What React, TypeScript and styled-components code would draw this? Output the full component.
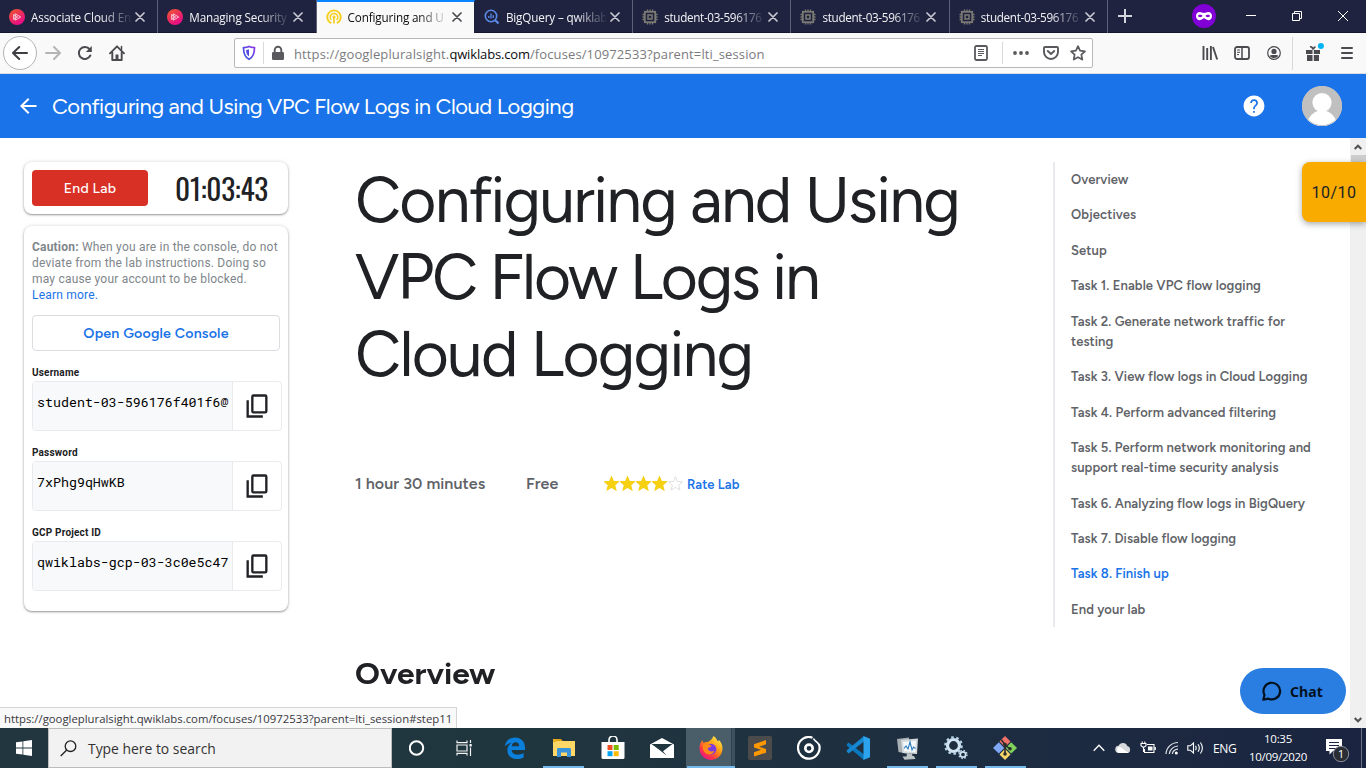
import React from 'react';
import styled, { createGlobalStyle, css } from 'styled-components';

const ui = '"Open Sans", "Noto Sans", sans-serif';
const display = 'Figtree, Lato, sans-serif';
const text = 'Figtree, Inter, sans-serif';

const GlobalStyle = createGlobalStyle`
  * { box-sizing: border-box; }
  html, body { margin: 0; padding: 0; overflow: hidden; }
  body { background: #fff; font-family: ${ui}; color: #202124; }
  svg { display: block; flex: none; }
  button { font: inherit; border: 0; background: none; padding: 0; margin: 0; }
  a { color: inherit; text-decoration: none; }
`;

const Screen = styled.div`
  width: 1366px;
  height: 768px;
  display: flex;
  flex-direction: column;
  overflow: hidden;
  position: relative;
`;

/* ---------- browser tab strip ---------- */

const TabStrip = styled.div`
  height: 33px;
  flex: none;
  display: flex;
  background: #20233f;
  border-bottom: 1px solid #15172c;
`;

const TabBox = styled.div<{ $active?: boolean }>`
  width: 158.3px;
  height: 33px;
  flex: none;
  display: flex;
  align-items: center;
  padding: 1px 0 0 9px;
  border-right: 1px solid ${p => (p.$active ? '#20233f' : '#5f6179')};
  color: #f4f4f8;
  ${p => p.$active && css`
    background: #f9f9fa;
    color: #0c0c0d;
    border-top: 2px solid #0a84ff;
    padding-top: 0;
    padding-bottom: 1px;
  `}
`;

const TabTitle = styled.span<{ $tight?: boolean }>`
  width: 100px;
  margin-left: 6px;
  white-space: nowrap;
  font-size: 11.7px;
  line-height: 18px;
  letter-spacing: ${p => (p.$tight ? -0.32 : -0.15)}px;
  mask-image: linear-gradient(to right, #000 70px, transparent 102px);
`;

const TabClose = styled.button`
  width: 18px;
  display: flex;
  justify-content: center;
  color: inherit;
`;

const NewTab = styled.button`
  width: 33px;
  display: flex;
  align-items: center;
  justify-content: center;
`;

const WindowButtons = styled.div`
  margin-left: auto;
  display: flex;
  align-items: center;
`;

const PrivateMark = styled.div`
  width: 24px;
  margin-right: 12px;
`;

const WindowButton = styled.button`
  width: 46px;
  height: 32px;
  display: flex;
  align-items: center;
  justify-content: center;
`;

/* ---------- browser toolbar ---------- */

const Toolbar = styled.div`
  height: 41px;
  flex: none;
  display: flex;
  align-items: center;
  background: #f9f9fa;
  border-bottom: 1px solid #dcdce0;
  padding-left: 3px;
`;

const BackButton = styled.button`
  width: 34px;
  height: 34px;
  border: 1px solid #b5b5b8;
  border-radius: 50%;
  background: #fff;
  display: flex;
  align-items: center;
  justify-content: center;
`;

const ToolButton = styled.button<{ $w?: number }>`
  width: ${p => p.$w ?? 32}px;
  height: 32px;
  flex: none;
  display: flex;
  align-items: center;
  justify-content: center;
`;

const AddressBar = styled.div`
  width: 859px;
  height: 30px;
  margin-left: 101px;
  display: flex;
  align-items: center;
  background: #fff;
  border: 1px solid #b8b8ba;
  border-radius: 2px;
`;

const BarDivider = styled.i<{ $h: number }>`
  width: 1px;
  height: ${p => p.$h}px;
  background: #d9d9dc;
`;

const Url = styled.div`
  flex: 1;
  margin-left: 1px;
  padding-top: 1px;
  font-size: 13px;
  line-height: 20px;
  letter-spacing: 0.12px;
  white-space: nowrap;
  color: #7b7b7e;
`;

const UrlHost = styled.span`
  color: #0c0c0d;
  letter-spacing: -0.15px;
`;

const ToolbarEnd = styled.div`
  display: flex;
  align-items: center;
  margin-left: auto;
  padding-right: 6px;
`;

/* ---------- lab page ---------- */

const LabHeader = styled.header`
  height: 64px;
  flex: none;
  display: flex;
  align-items: center;
  background: #1a73e8;
  color: #fff;
  padding: 0 24px 0 16px;
`;

const LabTitle = styled.div`
  margin-left: 12px;
  padding-top: 1px;
  font-family: ${display};
  font-size: 22px;
  line-height: 28px;
  letter-spacing: -0.49px;
  white-space: nowrap;
`;

const HeaderActions = styled.div`
  margin-left: auto;
  display: flex;
  align-items: center;
  gap: 36px;
`;

const Page = styled.div`
  flex: 1;
  min-height: 0;
  display: flex;
  background: #fff;
`;

const LabPanel = styled.aside`
  width: 264px;
  margin: 24px 0 0 24px;
  display: flex;
  flex-direction: column;
  gap: 12px;
`;

const Card = styled.section`
  background: #fff;
  border-radius: 8px;
  box-shadow: 0 1px 2px rgba(60, 64, 67, 0.5), 0 0 4px rgba(60, 64, 67, 0.14);
`;

const TimerCard = styled(Card)`
  height: 52px;
  display: flex;
  align-items: center;
  padding: 0 8px;
`;

const EndButton = styled.button`
  width: 116px;
  height: 36px;
  border-radius: 4px;
  background: #d93025;
  color: #fff;
  font-family: ${text};
  font-size: 14px;
  font-weight: 500;
  letter-spacing: 0.25px;
`;

const Timer = styled.div`
  margin-left: 27px;
  font-family: Oswald, "Roboto Condensed", sans-serif;
  font-size: 29.3px;
  line-height: 52px;
  letter-spacing: -0.25px;
`;

const AccessCard = styled(Card)`
  height: 385px;
  padding: 13px 6px 0 8px;
`;

const Caution = styled.p`
  margin: 0;
  font-family: Roboto, sans-serif;
  font-size: 12px;
  line-height: 16px;
  letter-spacing: 0.2px;
  color: #80868b;
  white-space: nowrap;
`;

const BlueLink = styled.a`
  color: #1a73e8;
`;

const ConsoleButton = styled.button`
  display: block;
  width: 248px;
  height: 36px;
  margin-top: 12px;
  border: 1px solid #dadce0;
  border-radius: 4px;
  color: #1a73e8;
  font-family: ${text};
  font-size: 14.2px;
  font-weight: 600;
  letter-spacing: 0.2px;
`;

const Credential = styled.div`
  margin-top: 14px;
`;

const CredentialLabel = styled.div`
  height: 16px;
  font-family: Roboto, sans-serif;
  font-size: 10px;
  font-weight: 700;
  line-height: 15px;
  letter-spacing: 0.19px;
`;

const CredentialField = styled.div`
  height: 50px;
  display: flex;
  border: 1px solid #e8eaed;
  border-radius: 4px;
  overflow: hidden;
`;

const CredentialValue = styled.div`
  width: 200px;
  padding: 0 3px 8px 4px;
  display: flex;
  align-items: center;
  background: #f8f9fa;
  border-right: 1px solid #e8eaed;
  font-family: "Roboto Mono", "DejaVu Sans Mono", monospace;
  font-size: 13.3px;
  white-space: nowrap;
  color: #000;
`;

const CopyButton = styled.button`
  flex: 1;
  display: flex;
  align-items: center;
  justify-content: center;
`;

const Article = styled.main`
  width: 698px;
  margin-left: 67px;
  padding-top: 23px;
`;

const Heading = styled.h1`
  margin: 0;
  font-family: ${display};
  font-size: 64px;
  font-weight: 400;
  line-height: 77px;
  white-space: nowrap;
`;

const HeadingLine = styled.span<{ $spacing: number }>`
  display: block;
  letter-spacing: ${p => p.$spacing}px;
`;

const Facts = styled.div`
  display: flex;
  align-items: center;
  height: 24px;
  margin-top: 79px;
  font-family: ${text};
  font-size: 16px;
  font-weight: 600;
  letter-spacing: 0.08px;
  color: #5f6368;
  white-space: nowrap;
`;

const Duration = styled.span`
  width: 171px;
`;

const Price = styled.span`
  width: 78px;
`;

const Stars = styled.span`
  display: flex;
  width: 83px;
`;

const RateLink = styled(BlueLink)`
  font-size: 13px;
  padding-top: 2px;
`;

const SectionHeading = styled.h2`
  width: 128px;
  margin: 159px 0 0;
  font-family: ${text};
  font-size: 29px;
  font-weight: 700;
  line-height: 40px;
  transform: scaleX(1.09);
  transform-origin: 0 0;
`;

const Outline = styled.nav`
  width: 270px;
  height: 465px;
  margin-top: 24px;
  padding: 8px 0 0 16px;
  border-left: 2px solid #e8eaed;
  display: flex;
  flex-direction: column;
  gap: 15.45px;
`;

const OutlineLink = styled.a<{ $current?: boolean }>`
  font-family: ${text};
  font-size: 13px;
  font-weight: 600;
  line-height: 20px;
  letter-spacing: 0.1px;
  color: ${p => (p.$current ? '#1a73e8' : '#5f6368')};
`;

const Scrollbar = styled.div`
  width: 16px;
  margin-left: auto;
  display: flex;
  flex-direction: column;
  align-items: center;
  background: #f0f0f0;
`;

const ScrollArrow = styled.div`
  height: 17px;
  display: flex;
  align-items: center;
`;

const ScrollThumb = styled.div`
  width: 15px;
  height: 55px;
  background: #cdcdcd;
  margin-bottom: auto;
`;

const ScoreBadge = styled.div`
  position: absolute;
  left: 1302px;
  top: 162px;
  width: 64px;
  height: 60px;
  border-radius: 8px 0 0 8px;
  background: #f9ab00;
  box-shadow: 0 2px 6px rgba(60, 64, 67, 0.45);
  display: flex;
  align-items: center;
  justify-content: center;
  font-family: Roboto, sans-serif;
  font-size: 16px;
  letter-spacing: 0.5px;
`;

const ChatButton = styled.button`
  position: absolute;
  left: 1240px;
  top: 668px;
  width: 106px;
  height: 46px;
  border-radius: 23px;
  background: #2a7de1;
  display: flex;
  align-items: center;
  padding-left: 21px;
  gap: 7px;
  color: #03111f;
  font-family: "Noto Sans", sans-serif;
  font-size: 14px;
  font-weight: 700;
  letter-spacing: 0.1px;
`;

const LinkPreview = styled.div`
  position: absolute;
  left: 0;
  top: 707px;
  width: 457px;
  height: 21px;
  padding: 1px 0 0 4px;
  border: solid #d4d4d8;
  border-width: 1px 1px 0 0;
  background: #f9f9fa;
  font-size: 11.33px;
  line-height: 20px;
  white-space: nowrap;
  color: #38383d;
`;

/* ---------- taskbar ---------- */

const Taskbar = styled.footer`
  height: 40px;
  flex: none;
  display: flex;
  background: linear-gradient(to right, #21363f, #20363f 40%, #1d2c41 75%, #1a2440);
  color: #fff;
`;

const StartButton = styled.button`
  width: 48px;
  display: flex;
  align-items: center;
  justify-content: center;
`;

const SearchBox = styled.div`
  width: 344px;
  display: flex;
  align-items: center;
  padding-left: 11px;
  gap: 11px;
  background: #f2f2f2;
  border: 1px solid #bcbcbc;
  color: #333;
  font-size: 13.9px;
`;

const AppSlot = styled.div<{ $open?: boolean; $focus?: boolean }>`
  width: 49.07px;
  height: 40px;
  display: flex;
  align-items: center;
  justify-content: center;
  position: relative;
  ${p => p.$focus && css`
    background: linear-gradient(to right, #4a5e69 0 45px, #2b424f 45px 46px, #3c515d 46px);
  `}
  ${p => (p.$open || p.$focus) && css`
    &::after {
      content: '';
      position: absolute;
      left: ${p.$focus ? 1 : 4}px;
      right: ${p.$focus ? 0 : 4}px;
      bottom: 0;
      height: 2px;
      background: #76b9ed;
    }
  `}
`;

const Tray = styled.div`
  margin-left: auto;
  display: flex;
  align-items: center;
  font-size: 12px;
`;

const TrayIcon = styled.div<{ $w: number }>`
  width: ${p => p.$w}px;
  display: flex;
  justify-content: center;
`;

const Language = styled.div`
  width: 32px;
  padding-left: 6px;
  letter-spacing: -0.4px;
`;

const Clock = styled.div`
  width: 78px;
  text-align: center;
  font-size: 11.5px;
  line-height: 18px;
  letter-spacing: -0.3px;
`;

const Notifications = styled.div`
  width: 44px;
  padding: 4px 4px 0 0;
  display: flex;
  justify-content: center;
`;

const ShowDesktop = styled.div`
  width: 5px;
  height: 40px;
  border-left: 1px solid #6a7386;
`;

/* ---------- icons ---------- */

const PluralsightIcon = () => (
  <svg width="16" height="16" viewBox="0 0 16 16">
    <defs>
      <linearGradient id="ps" x1="0" y1="0" x2="0.6" y2="1">
        <stop offset="0" stopColor="#f05a28" />
        <stop offset="1" stopColor="#e80a89" />
      </linearGradient>
    </defs>
    <circle cx="8" cy="8" r="8" fill="url(#ps)" />
    <path d="M6.200 4.800 11.700 8l-5.500 3.200zM4.600 5.600v4.800L8.600 8z" fill="none" stroke="#fff" strokeWidth=".7" />
  </svg>
);

const QwiklabsIcon = () => (
  <svg width="16" height="16" viewBox="0 0 16 16" fill="none" stroke="#f5cf1d">
    <path d="M5.200 14.200A6.700 6.700 0 1 1 10.800 14.200" strokeWidth="1.900" />
    <path d="M5.400 11A3.800 3.800 0 1 1 10.600 11" strokeWidth="1.500" />
    <circle cx="8" cy="8" r="1.500" fill="#f5cf1d" stroke="none" />
    <path d="M8 8v6.500" strokeWidth="1.700" />
  </svg>
);

const BigQueryIcon = () => (
  <svg width="16" height="16" viewBox="0 0 16 16" fill="none" stroke="#5b8bea">
    <circle cx="7" cy="7" r="5.700" strokeWidth="1.600" />
    <path d="M11.200 11.200 14.500 14.500" strokeWidth="2.200" />
    <path d="M4.800 7v2M7 4.600v5M9.200 6.200v2.800" strokeWidth="1.300" />
  </svg>
);

const ChipIcon = () => (
  <svg width="16" height="16" viewBox="0 0 16 16" fill="none" stroke="#7b7a74">
    <rect x="2.800" y="2.800" width="10.400" height="10.400" strokeWidth="1.800" />
    <rect x="6" y="6" width="4" height="4" strokeWidth="1.500" />
    <path d="M5.500.5v2M8 .5v2M10.500.5v2M5.500 13.500v2M8 13.500v2M10.500 13.500v2M.5 5.500h2M.5 8h2M.5 10.500h2M13.500 5.500h2M13.500 8h2M13.500 10.500h2" strokeWidth="1.300" />
  </svg>
);

const CloseIcon = ({ color }: { color: string }) => (
  <svg width="10" height="10" viewBox="0 0 10 10" stroke={color} strokeWidth="1.700" strokeLinecap="round">
    <path d="M1 1l8 8M9 1 1 9" />
  </svg>
);

const PlusIcon = () => (
  <svg width="14" height="14" viewBox="0 0 14 14" stroke="#d4d4de" strokeWidth="2">
    <path d="M7 0v14M0 7h14" />
  </svg>
);

const MaskIcon = () => (
  <svg width="24" height="24" viewBox="0 0 24 24">
    <circle cx="12" cy="12" r="12" fill="#8000d7" />
    <path fillRule="evenodd" fill="#fff" d="M7.700 8C5.200 8 4 9.700 4 12c0 2.500 1.500 4.200 3.600 4.200 2.300 0 3.200-1.900 4.400-1.900s2.100 1.900 4.400 1.900c2.100 0 3.600-1.700 3.600-4.200 0-2.300-1.200-4-3.700-4-1.900 0-2.700 1-4.300 1S9.600 8 7.700 8zM8.200 10.800c1.200 0 2.100.6 2.400 1.300-.5.700-1.300 1.100-2.400 1.100s-1.900-.5-2.200-1.200c.3-.7 1-1.200 2.200-1.200zm7.600 0c1.200 0 1.900.5 2.200 1.200-.3.700-1.100 1.200-2.200 1.200s-1.900-.4-2.400-1.100c.3-.7 1.200-1.300 2.400-1.300z" />
  </svg>
);

const MinimizeIcon = () => (
  <svg width="10" height="10" viewBox="0 0 10 10"><path d="M0 4.500h10" stroke="#fff" /></svg>
);
const RestoreIcon = () => (
  <svg width="10" height="10" viewBox="0 0 10 10" fill="none" stroke="#fff">
    <path d="M.5 2.500h7v7h-7zM2.500 2.500v-2h7v7h-2" />
  </svg>
);
const WindowCloseIcon = () => (
  <svg width="10" height="10" viewBox="0 0 10 10" stroke="#fff"><path d="M0 0l10 10M10 0 0 10" /></svg>
);

const ArrowIcon = ({ color, flip }: { color: string; flip?: boolean }) => (
  <svg width="16" height="16" viewBox="0 0 16 16" fill="none" stroke={color} strokeWidth="2" strokeLinecap="round" strokeLinejoin="round">
    <path d={flip ? 'M1 8h14M9 2l6 6-6 6' : 'M15 8H1M7.200 2 1 8l6.200 6'} />
  </svg>
);

const ReloadIcon = () => (
  <svg width="16" height="16" viewBox="0 0 16 16" fill="none" stroke="#4a4a4f" strokeWidth="2" strokeLinecap="round">
    <path d="M13.300 10.500A6 6 0 1 1 12.600 4.200" />
    <path d="M14.800 1v6H8.800z" fill="#4a4a4f" stroke="none" />
  </svg>
);

const HomeIcon = () => (
  <svg width="16" height="16" viewBox="0 0 16 16" fill="none" stroke="#4a4a4f" strokeWidth="1.900" strokeLinejoin="round" strokeLinecap="round">
    <path d="M1 8.300 8 1.300l7 7" />
    <path d="M3.300 7.500V15h9.400V7.500" />
    <path d="M8 9.500V15" strokeWidth="3" strokeLinecap="butt" />
    <path d="M12.500 1.500v3" strokeWidth="1.500" />
  </svg>
);

const ShieldIcon = () => (
  <svg width="14" height="16" viewBox="0 0 14 16">
    <defs>
      <linearGradient id="sh" x1="0" y1="1" x2="1" y2="0">
        <stop offset="0" stopColor="#2f5bdd" />
        <stop offset="1" stopColor="#8a35e8" />
      </linearGradient>
    </defs>
    <path d="M7 1.400C5.500 2.200 3.600 2.500 1.500 2.700c0 5.300.8 9.200 5.500 11.600 4.700-2.400 5.500-6.300 5.500-11.600C10.400 2.500 8.500 2.200 7 1.400z" fill="none" stroke="url(#sh)" strokeWidth="1.700" />
    <path d="M7 4.200v7.300C4.800 9.900 4.200 8 4.100 4.900 5.200 4.800 6.100 4.600 7 4.200z" fill="#5548e0" />
  </svg>
);

const LockIcon = () => (
  <svg width="14" height="16" viewBox="0 0 14 16">
    <rect x="0" y="7" width="12" height="8" rx="1.200" fill="#5a5a5e" />
    <path d="M2.700 8V5a3.300 3.300 0 0 1 6.600 0v3" fill="none" stroke="#5a5a5e" strokeWidth="1.900" />
  </svg>
);

const ReaderIcon = () => (
  <svg width="14" height="16" viewBox="0 0 14 16" fill="none" stroke="#5a5a5e">
    <rect x="1" y="1" width="12" height="14" rx="1.500" strokeWidth="1.800" />
    <path d="M4 4.500h6M4 6.500h6M4 8.500h6M4 10.500h4" />
  </svg>
);

const DotsIcon = () => (
  <svg width="16" height="4" viewBox="0 0 16 4" fill="#5a5a5e">
    <circle cx="2" cy="2" r="1.900" /><circle cx="8" cy="2" r="1.900" /><circle cx="14" cy="2" r="1.900" />
  </svg>
);

const PocketIcon = () => (
  <svg width="16" height="14" viewBox="0 0 16 14" fill="none" stroke="#5a5a5e" strokeWidth="1.900" strokeLinecap="round" strokeLinejoin="round">
    <path d="M2 1h12a1 1 0 0 1 1 1v4a7 7 0 0 1-14 0V2a1 1 0 0 1 1-1z" />
    <path d="M4.800 5 8 8l3.200-3" />
  </svg>
);

const StarOutlineIcon = () => (
  <svg width="16" height="16" viewBox="0 0 16 16" fill="none" stroke="#5a5a5e" strokeWidth="1.700" strokeLinejoin="round">
    <path d="M8 1.200l2.050 4.500 4.900.6-3.600 3.400.95 4.900L8 12.200l-4.300 2.400.95-4.900-3.600-3.400 4.900-.6z" />
  </svg>
);

const LibraryIcon = () => (
  <svg width="16" height="14" viewBox="0 0 16 14" stroke="#4a4a4f" strokeWidth="1.900">
    <path d="M1.500 0v14M5.200 2v12M8.900 0v14M11 1l4.200 12.500" />
  </svg>
);

const SidebarIcon = () => (
  <svg width="16" height="14" viewBox="0 0 16 14" fill="none" stroke="#4a4a4f" strokeWidth="1.800">
    <rect x="1" y="1" width="14" height="12" rx="2" />
    <path d="M8 1v12" strokeWidth="1.500" />
    <path d="M3 4h3M3 6.300h3M3 8.600h2" strokeWidth="1" />
  </svg>
);

const AccountIcon = () => (
  <svg width="14" height="14" viewBox="0 0 14 14">
    <circle cx="7" cy="7" r="6.300" fill="none" stroke="#4a4a4f" strokeWidth="1.200" />
    <circle cx="7" cy="5.400" r="2.600" fill="#4a4a4f" />
    <path d="M2.700 9.800C4 9 5 9 7 9s3 0 4.300.8C10.300 11.500 8.800 12 7 12s-3.300-.5-4.300-2.200z" fill="#4a4a4f" />
  </svg>
);

const GiftIcon = () => (
  <svg width="20" height="20" viewBox="0 0 20 20">
    <path d="M1 7h6.500v4H1zM8.800 7H15v4H8.800zM2 12h5.500v6H2zM8.800 12H14v6H8.800z" fill="#4a4a4f" />
    <path d="M8 6.500C7.500 4.500 6.500 3.500 5 3.800M8.300 6.500c.3-1.600 1-2.500 2.200-2.700" fill="none" stroke="#4a4a4f" strokeWidth="1.700" />
    <circle cx="15.900" cy="3" r="3" fill="#00b3f4" />
  </svg>
);

const MenuIcon = () => (
  <svg width="12" height="12" viewBox="0 0 12 12" stroke="#4a4a4f" strokeWidth="2" strokeLinecap="round">
    <path d="M1 1h10M1 6h10M1 11h10" />
  </svg>
);

const HeaderBackIcon = () => (
  <svg width="24" height="24" viewBox="0 0 24 24" fill="#fff">
    <path d="M20.500 11H7.830l5.590-5.590L12 4l-8 8 8 8 1.410-1.410L7.830 13H20.500z" />
  </svg>
);

const HelpIcon = () => (
  <svg width="24" height="24" viewBox="0 0 24 24" fill="#fff">
    <path d="M12 1.600C6.300 1.600 1.600 6.300 1.600 12S6.300 22.400 12 22.400 22.400 17.700 22.400 12 17.700 1.600 12 1.600zm.8 17.200h-1.700v-1.700h1.700zm2.100-7.400-.9.900c-.8.800-1.200 1.500-1.200 3h-1.700v-.5c0-1.200.5-2.200 1.200-3l1.200-1.200c.4-.4.7-.9.700-1.500a2.200 2.200 0 0 0-4.400 0H8.200a3.800 3.800 0 0 1 7.700 0c0 .9-.4 1.700-1 2.300z" />
  </svg>
);

const Avatar = () => (
  <svg width="40" height="40" viewBox="0 0 40 40">
    <defs><clipPath id="av"><circle cx="20" cy="20" r="20" /></clipPath></defs>
    <g clipPath="url(#av)">
      <rect width="40" height="40" fill="#c0c0c0" />
      <path d="M5 36C9 27 14 24.500 20 24.500S31 27 35 36v6H5z" fill="#fff" />
      <circle cx="20" cy="16.500" r="9.600" fill="#fff" />
    </g>
    <circle cx="20" cy="20" r="19.600" fill="none" stroke="#c0c0c0" />
  </svg>
);

const CopyIcon = () => (
  <svg width="28" height="28" viewBox="0 0 24 24" fill="none" stroke="#202124" strokeWidth="2">
    <rect x="8" y="3" width="12" height="14.500" rx="1" />
    <path d="M4 7v14h13" />
  </svg>
);

const starPath = 'M7.500.8l2 4.600 5 .4-3.800 3.300 1.200 4.900-4.400-2.600L3.100 14l1.200-4.900L.5 5.800l5-.4z';
const RatingStar = ({ filled }: { filled?: boolean }) => (
  <svg width="16" height="15" viewBox="0 0 16 15">
    <path d={starPath} fill={filled ? '#f7d012' : '#fff'} stroke={filled ? '#f4d01a' : '#d8d8d8'} strokeWidth={filled ? 1.1 : 0.8} />
  </svg>
);

const ScrollChevron = ({ down }: { down?: boolean }) => (
  <svg width="8" height="6" viewBox="0 0 8 6" fill="none" stroke="#505050" strokeWidth="2">
    <path d={down ? 'M.7 1 4 4.300 7.300 1' : 'M.7 5 4 1.700 7.300 5'} />
  </svg>
);

const ChatIcon = () => (
  <svg width="22" height="22" viewBox="0 0 22 22" fill="none" stroke="#03111f" strokeWidth="2.200" strokeLinejoin="round">
    <path d="M2.300 19.700 3.500 15A8.300 8.300 0 1 1 7.500 18.700z" />
  </svg>
);

const WindowsIcon = () => (
  <svg width="16" height="16" viewBox="0 0 16 16" fill="#fff">
    <path d="M0 2.300 6.500 1.400v6.200H0zM7.300 1.300 16 0v7.600H7.300zM0 8.400h6.500v6.200L0 13.700zM7.300 8.400H16V16l-8.700-1.300z" />
  </svg>
);

const SearchIcon = () => (
  <svg width="17" height="17" viewBox="0 0 17 17" fill="none" stroke="#222" strokeWidth="1.300">
    <circle cx="10.500" cy="6.200" r="5.300" /><path d="M6.700 10 .7 16" />
  </svg>
);

const CortanaIcon = () => (
  <svg width="16" height="16" viewBox="0 0 16 16"><circle cx="7.500" cy="8" r="6.700" fill="none" stroke="#fff" strokeWidth="2" /></svg>
);

const TaskViewIcon = () => (
  <svg width="20" height="16" viewBox="0 0 20 16" fill="none" stroke="#f2f2f2" strokeWidth="1.200">
    <path d="M1 5h10v6H1zM1 .5v2.200h10V.5M1 15.500v-2.200h10v2.200M14.500 0v3M14.500 7.500V16" />
    <rect x="13.500" y="4" width="2.200" height="2.500" fill="#fff" stroke="none" />
  </svg>
);

const EdgeIcon = () => (
  <svg width="22" height="22" viewBox="0 0 22 22" fill="#0a7fdc">
    <path d="M.8 9.600C1.500 4 5.600.4 11 .4c6.200 0 10 4.300 10 10.100v2.600H7.600c.2 3 2.700 4.700 6 4.700 2.200 0 4.300-.6 6-1.700v4.300c-1.900 1-4.300 1.500-6.700 1.500-5.800 0-9.500-3.300-9.500-8.700 0-3.200 1.700-6 4.500-7.500C4.700 6.200 2.200 7.600.8 9.600zM7.800 9.200h7.400c0-2.400-1.300-3.900-3.600-3.900-2.100 0-3.500 1.600-3.800 3.900z" />
  </svg>
);

const ExplorerIcon = () => (
  <svg width="22" height="20" viewBox="0 0 22 20">
    <path d="M0 1h8l2 2.500H0z" fill="#e2a312" />
    <path d="M0 3h22v15H0z" fill="#ffd766" />
    <path d="M4 19v-7.500C4 10.600 4.600 10 5.500 10h11c.9 0 1.500.6 1.500 1.500V19h-4v-4.500H8V19z" fill="#3a94dc" />
    <path d="M0 1h3v3H0z" fill="#eeb01e" />
  </svg>
);

const StoreIcon = () => (
  <svg width="24" height="24" viewBox="0 0 24 24">
    <path d="M8 6V4a4 4 0 0 1 8 0v2" fill="none" stroke="#fff" strokeWidth="1.600" />
    <path d="M.5 6h23v15.500a1.500 1.500 0 0 1-1.500 1.500H2a1.500 1.500 0 0 1-1.500-1.500z" fill="#fff" />
    <path d="M6.500 9h5v5h-5z" fill="#f25022" /><path d="M12.700 9h5v5h-5z" fill="#7fba00" />
    <path d="M6.500 15.200h5v5h-5z" fill="#00a4ef" /><path d="M12.700 15.200h5v5h-5z" fill="#ffb900" />
  </svg>
);

const MailIcon = () => (
  <svg width="24" height="20" viewBox="0 0 24 20">
    <path d="M0 6.500 12 0l12 6.500V20H0z" fill="#fff" />
    <path d="M1.500 6h21L13 13.200l3.500 4.300L9.500 12z" fill="#20363f" />
  </svg>
);

const FirefoxIcon = () => (
  <svg width="24" height="24" viewBox="0 0 24 24">
    <defs>
      <linearGradient id="fx" x1="0.85" y1="0.1" x2="0.2" y2="0.95">
        <stop offset="0" stopColor="#ffe64a" />
        <stop offset="0.4" stopColor="#ff980e" />
        <stop offset="0.75" stopColor="#ff3647" />
        <stop offset="1" stopColor="#e31587" />
      </linearGradient>
    </defs>
    <path d="M14.500 0c2.500 1.700 3.600 3.700 4 5.200 1-.1 1.300-.5 1.300-1.500C22.700 6.600 23.500 9.700 23.500 12.500 23.500 19 18.300 24 12 24S.5 19 .5 12.500C.5 9 1.600 6.200 3.500 4c0 1.200.4 2 1 2.700C5.800 6 7.500 5.800 9 6c1.800-1.400 4.500-2.800 5.500-6z" fill="url(#fx)" />
    <circle cx="12" cy="13.200" r="5.400" fill="#7a3be0" />
    <path d="M3.800 8.500C7 7 10.500 8.300 12.800 10c-1 1.300-3.400 1-4.300 2.500 1.200 3.500 5 3.500 7 2-1 3.500-5 5-8.200 3.200-3-1.800-4-5.200-3.500-9.200z" fill="#ff8a16" />
  </svg>
);

const SublimeIcon = () => (
  <svg width="24" height="24" viewBox="0 0 24 24">
    <rect width="24" height="24" rx="2" fill="#4b4b4b" />
    <path d="M6 8.200 18 4v4.300l-7 2.500 7 2.200v3.700L6 20.500v-4.200l7-2.500-7-2.200z" fill="#ff9800" />
  </svg>
);

const GrooveIcon = () => (
  <svg width="24" height="24" viewBox="0 0 24 24" fill="none" stroke="#fff">
    <path d="M15.500 1.700A10.800 10.800 0 1 0 21.800 7.800" strokeWidth="2.200" />
    <circle cx="12" cy="12.300" r="3.700" strokeWidth="2.600" />
    <path d="M16.500 2.500c1 2.500 3.500 3 5 5.500" strokeWidth="1.700" />
  </svg>
);

const VsCodeIcon = () => (
  <svg width="24" height="24" viewBox="0 0 24 24">
    <path d="M.8 8.200 2.700 6.600 18 18.500V24L.8 9.800z" fill="#0b78bd" />
    <path d="M.8 15.800 2.700 17.400 18 5.500V0L.8 14.200z" fill="#1788cf" />
    <path d="M17.500 0 24 2.800v18.400L17.500 24z" fill="#2ba3ee" />
  </svg>
);

const MonitorIcon = () => (
  <svg width="24" height="24" viewBox="0 0 24 24">
    <path d="M2 3 14 1.500V18L3.500 16z" fill="#a9b0b3" />
    <path d="M6 4 23 2.500 22 18 7.500 17z" fill="#d5dadc" />
    <path d="M8 6 21 5l-.7 11L9 15.200z" fill="#f4fafc" />
    <path d="M9 12.500 11 10l2 3 2-7 2 8 1.500-3 2 1.500" fill="none" stroke="#2f7bc0" strokeWidth="1.100" />
    <path d="M12 17.500h5l.5 3h-6zM7.500 20.500 19 20l1.500 3-11 .7z" fill="#bcc3c6" />
  </svg>
);

const GearsIcon = () => (
  <svg width="26" height="24" viewBox="0 0 26 24" fill="none">
    <circle cx="10.500" cy="9.500" r="6" stroke="#cfe4f0" strokeWidth="3.200" />
    <circle cx="10.500" cy="9.500" r="8.200" stroke="#b8d4e6" strokeWidth="2.200" strokeDasharray="2.600 2.550" />
    <circle cx="20" cy="18.500" r="2.700" stroke="#cfe4f0" strokeWidth="1.700" />
    <circle cx="20" cy="18.500" r="4" stroke="#b8d4e6" strokeWidth="1.400" strokeDasharray="1.600 1.540" />
  </svg>
);

const GitIcon = () => (
  <svg width="24" height="24" viewBox="0 0 24 24">
    <path d="M12 0l5.500 5.600L12 11 6.500 5.600z" fill="#f07167" />
    <path d="M5.800 6.300 11.300 12l-5.500 5.600L0 12z" fill="#7ea8f4" />
    <path d="M18.200 6.300 24 12l-5.800 5.600L12.700 12z" fill="#7fd35c" />
    <path d="M12 12.800l5.500 5.600L12 24l-5.500-5.600z" fill="#f8d669" />
    <path d="M8.500 4 12 8.500V19M12 9l5 4" fill="none" stroke="#2b2b2b" strokeWidth="1.600" />
    <circle cx="12" cy="8.500" r="1.800" fill="#2b2b2b" /><circle cx="17" cy="12.800" r="1.800" fill="#2b2b2b" /><circle cx="12" cy="18" r="1.800" fill="#2b2b2b" />
  </svg>
);

const TrayChevron = () => (
  <svg width="12" height="8" viewBox="0 0 12 8" fill="none" stroke="#fff" strokeWidth="1.300"><path d="M.7 6.800 6 1.300l5.300 5.500" /></svg>
);
const CloudIcon = () => (
  <svg width="17" height="12" viewBox="0 0 17 12">
    <path d="M4 11a3.600 3.600 0 0 1-.3-7.200A4.600 4.600 0 0 1 12.300 4 3.700 3.700 0 0 1 13 11z" fill="#d7d9dc" />
    <path d="M4 11a3.300 3.300 0 0 1 1-6.300l8.500 6.200z" fill="#fff" />
  </svg>
);
const BatteryIcon = () => (
  <svg width="16" height="14" viewBox="0 0 16 14" fill="none" stroke="#fff" strokeWidth="1.100">
    <path d="M7 3.500h7v8H4.500V8M15.300 6v3" /><path d="M8.500 6h3.500v3H8.500z" fill="#fff" />
    <path d="M1 2.500h5v2.200L4.500 6h-2L1 4.700zM2.200.5v2M4.800.5v2M3.500 6v5" />
  </svg>
);
const WifiIcon = () => (
  <svg width="14" height="14" viewBox="0 0 14 14" fill="none" stroke="#dfe2e8" strokeWidth="1.200">
    <path d="M1 13A12 12 0 0 1 13 1.500M4.300 13A9 9 0 0 1 13 5M7.300 13A6 6 0 0 1 13 8.200" />
    <circle cx="11.300" cy="12" r="1.500" fill="#fff" stroke="none" />
  </svg>
);
const SpeakerIcon = () => (
  <svg width="17" height="14" viewBox="0 0 17 14" fill="none" stroke="#fff" strokeWidth="1.100">
    <path d="M.8 4.800h2.500L6.500 2v10L3.300 9.200H.8zM8.500 4.800c.8 1.300.8 3.100 0 4.400M11 3.200c1.600 2.300 1.600 5.300 0 7.600M13.400 1.500c2.400 3.300 2.400 7.700 0 11" />
  </svg>
);
const NotificationIcon = () => (
  <svg width="26" height="26" viewBox="0 0 26 26">
    <path d="M2 2h16v12H9l-3.500 3.500V14H2z" fill="#fff" />
    <path d="M5 5.500h10M5 8.500h10M5 11.500h7" stroke="#1c2741" strokeWidth="1.100" />
    <circle cx="17" cy="17" r="7.700" fill="#2a2d34" stroke="#8c9099" />
    <text x="17" y="21" textAnchor="middle" fill="#fff" fontSize="11.500" fontFamily="Open Sans, sans-serif">1</text>
  </svg>
);

/* ---------- data ---------- */

const tabs: { icon: React.ReactNode; title: string; active?: boolean; tight?: boolean }[] = [
  { icon: <PluralsightIcon />, title: 'Associate Cloud En' },
  { icon: <PluralsightIcon />, title: 'Managing Security' },
  { icon: <QwiklabsIcon />, title: 'Configuring and U', active: true },
  { icon: <BigQueryIcon />, title: 'BigQuery – qwiklab' },
  { icon: <ChipIcon />, title: 'student-03-596176', tight: true },
  { icon: <ChipIcon />, title: 'student-03-596176', tight: true },
  { icon: <ChipIcon />, title: 'student-03-596176', tight: true },
];

const credentials = [
  { label: 'Username', value: 'student-03-596176f401f6@' },
  { label: 'Password', value: '7xPhg9qHwKB' },
  { label: 'GCP Project ID', value: 'qwiklabs-gcp-03-3c0e5c47' },
];

const outline = [
  'Overview',
  'Objectives',
  'Setup',
  'Task 1. Enable VPC flow logging',
  'Task 2. Generate network traffic for testing',
  'Task 3. View flow logs in Cloud Logging',
  'Task 4. Perform advanced filtering',
  'Task 5. Perform network monitoring and support real-time security analysis',
  'Task 6. Analyzing flow logs in BigQuery',
  'Task 7. Disable flow logging',
  'Task 8. Finish up',
  'End your lab',
];

const apps: { icon: React.ReactNode; open?: boolean; focus?: boolean }[] = [
  { icon: <CortanaIcon /> },
  { icon: <TaskViewIcon /> },
  { icon: <EdgeIcon /> },
  { icon: <ExplorerIcon />, open: true },
  { icon: <StoreIcon /> },
  { icon: <MailIcon /> },
  { icon: <FirefoxIcon />, focus: true },
  { icon: <SublimeIcon /> },
  { icon: <GrooveIcon /> },
  { icon: <VsCodeIcon /> },
  { icon: <MonitorIcon />, open: true },
  { icon: <GearsIcon />, open: true },
  { icon: <GitIcon />, open: true },
];

export default function App() {
  return (
    <Screen>
      <GlobalStyle />
      <TabStrip>
        {tabs.map((tab, i) => (
          <TabBox key={i} $active={tab.active}>
            {tab.icon}
            <TabTitle $tight={tab.tight}>{tab.title}</TabTitle>
            <TabClose><CloseIcon color={tab.active ? '#4a4a4f' : '#c9c9d4'} /></TabClose>
          </TabBox>
        ))}
        <NewTab><PlusIcon /></NewTab>
        <WindowButtons>
          <PrivateMark><MaskIcon /></PrivateMark>
          <WindowButton><MinimizeIcon /></WindowButton>
          <WindowButton><RestoreIcon /></WindowButton>
          <WindowButton><WindowCloseIcon /></WindowButton>
        </WindowButtons>
      </TabStrip>

      <Toolbar>
        <BackButton><ArrowIcon color="#3e3e43" /></BackButton>
        <ToolButton><ArrowIcon color="#b4b4b6" flip /></ToolButton>
        <ToolButton><ReloadIcon /></ToolButton>
        <ToolButton><HomeIcon /></ToolButton>
        <AddressBar>
          <ToolButton $w={28}><ShieldIcon /></ToolButton>
          <BarDivider $h={22} />
          <ToolButton $w={29}><LockIcon /></ToolButton>
          <Url>
            https://googlepluralsight.<UrlHost>qwiklabs.com</UrlHost>/focuses/10972533?parent=lti_session
          </Url>
          <ToolButton $w={42}><ReaderIcon /></ToolButton>
          <BarDivider $h={22} />
          <ToolButton $w={36}><DotsIcon /></ToolButton>
          <ToolButton $w={24}><PocketIcon /></ToolButton>
          <ToolButton $w={29}><StarOutlineIcon /></ToolButton>
        </AddressBar>
        <ToolbarEnd>
          <ToolButton><LibraryIcon /></ToolButton>
          <ToolButton><SidebarIcon /></ToolButton>
          <ToolButton><AccountIcon /></ToolButton>
          <ToolButton $w={5}><BarDivider $h={33} /></ToolButton>
          <ToolButton $w={39}><GiftIcon /></ToolButton>
          <ToolButton $w={26}><MenuIcon /></ToolButton>
        </ToolbarEnd>
      </Toolbar>

      <LabHeader>
        <HeaderBackIcon />
        <LabTitle>Configuring and Using VPC Flow Logs in Cloud Logging</LabTitle>
        <HeaderActions>
          <HelpIcon />
          <Avatar />
        </HeaderActions>
      </LabHeader>

      <Page>
        <LabPanel>
          <TimerCard>
            <EndButton>End Lab</EndButton>
            <Timer>01:03:43</Timer>
          </TimerCard>
          <AccessCard>
            <Caution>
              <b>Caution:</b> When you are in the console, do not<br />
              deviate from the lab instructions. Doing so<br />
              may cause your account to be blocked.<br />
              <BlueLink>Learn more.</BlueLink>
            </Caution>
            <ConsoleButton>Open Google Console</ConsoleButton>
            {credentials.map(c => (
              <Credential key={c.label}>
                <CredentialLabel>{c.label}</CredentialLabel>
                <CredentialField>
                  <CredentialValue>{c.value}</CredentialValue>
                  <CopyButton><CopyIcon /></CopyButton>
                </CredentialField>
              </Credential>
            ))}
          </AccessCard>
        </LabPanel>

        <Article>
          <Heading>
            <HeadingLine $spacing={-1.77}>Configuring and Using</HeadingLine>
            <HeadingLine $spacing={-2.2}>VPC Flow Logs in</HeadingLine>
            <HeadingLine $spacing={-1.75}>Cloud Logging</HeadingLine>
          </Heading>
          <Facts>
            <Duration>1 hour 30 minutes</Duration>
            <Price>Free</Price>
            <Stars>
              <RatingStar filled /><RatingStar filled /><RatingStar filled /><RatingStar filled /><RatingStar />
            </Stars>
            <RateLink>Rate Lab</RateLink>
          </Facts>
          <SectionHeading>Overview</SectionHeading>
        </Article>

        <Outline>
          {outline.map(item => (
            <OutlineLink key={item} $current={item.startsWith('Task 8')}>{item}</OutlineLink>
          ))}
        </Outline>

        <Scrollbar>
          <ScrollArrow><ScrollChevron /></ScrollArrow>
          <ScrollThumb />
          <ScrollArrow><ScrollChevron down /></ScrollArrow>
        </Scrollbar>
      </Page>

      <Taskbar>
        <StartButton><WindowsIcon /></StartButton>
        <SearchBox><SearchIcon />Type here to search</SearchBox>
        {apps.map((app, i) => (
          <AppSlot key={i} $open={app.open} $focus={app.focus}>{app.icon}</AppSlot>
        ))}
        <Tray>
          <TrayIcon $w={24}><TrayChevron /></TrayIcon>
          <TrayIcon $w={24}><CloudIcon /></TrayIcon>
          <TrayIcon $w={25}><BatteryIcon /></TrayIcon>
          <TrayIcon $w={24}><WifiIcon /></TrayIcon>
          <TrayIcon $w={23}><SpeakerIcon /></TrayIcon>
          <Language>ENG</Language>
          <Clock>10:35<br />10/09/2020</Clock>
          <Notifications><NotificationIcon /></Notifications>
          <ShowDesktop />
        </Tray>
      </Taskbar>

      <ScoreBadge>10/10</ScoreBadge>
      <ChatButton><ChatIcon />Chat</ChatButton>
      <LinkPreview>
        https://googlepluralsight.qwiklabs.com/focuses/10972533?parent=lti_session#step11
      </LinkPreview>
    </Screen>
  );
}
